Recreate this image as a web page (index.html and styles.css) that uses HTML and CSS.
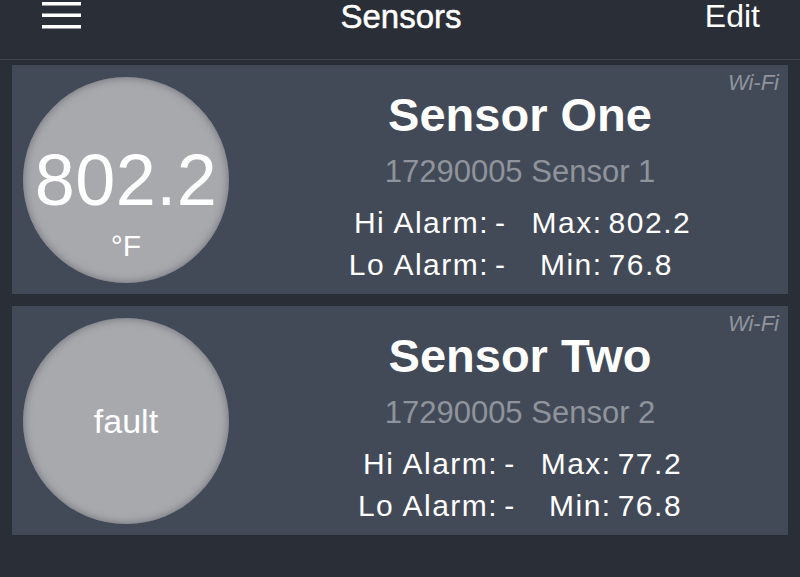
FILE: index.html
```html
<!DOCTYPE html>
<html>
<head>
<meta charset="utf-8">
<link rel="stylesheet" href="styles.css">
</head>
<body>
<header class="topbar">
  <div class="topbar-left">
    <svg class="menu-icon" width="39" height="31" viewBox="0 0 39 31">
      <rect x="0" y="2" width="39" height="3.5" fill="#ffffff"/>
      <rect x="0" y="13.5" width="39" height="3.5" fill="#ffffff"/>
      <rect x="0" y="25" width="39" height="3.5" fill="#ffffff"/>
    </svg>
  </div>
  <div class="topbar-title">Sensors</div>
  <div class="topbar-right">Edit</div>
</header>
<main class="list">
  <section class="card">
    <div class="gauge">
      <div class="gauge-inner with-unit">
        <div class="gauge-value">802.2</div>
        <div class="gauge-unit">°F</div>
      </div>
    </div>
    <div class="info">
      <div class="name">Sensor One</div>
      <div class="serial">17290005 Sensor 1</div>
      <div class="stats">
        <div class="lbl">Hi Alarm:</div><div class="val">-</div>
        <div class="lbl gap">Max:</div><div class="val">802.2</div>
        <div class="lbl">Lo Alarm:</div><div class="val">-</div>
        <div class="lbl gap">Min:</div><div class="val">76.8</div>
      </div>
    </div>
    <div class="conn">Wi-Fi</div>
  </section>
  <section class="card">
    <div class="gauge">
      <div class="gauge-inner">
        <div class="gauge-fault">fault</div>
      </div>
    </div>
    <div class="info">
      <div class="name">Sensor Two</div>
      <div class="serial">17290005 Sensor 2</div>
      <div class="stats">
        <div class="lbl">Hi Alarm:</div><div class="val">-</div>
        <div class="lbl gap">Max:</div><div class="val">77.2</div>
        <div class="lbl">Lo Alarm:</div><div class="val">-</div>
        <div class="lbl gap">Min:</div><div class="val">76.8</div>
      </div>
    </div>
    <div class="conn">Wi-Fi</div>
  </section>
</main>
</body>
</html>
```
FILE: styles.css
```css
html, body {
  margin: 0;
  padding: 0;
  background: #2a2e36;
  font-family: "Liberation Sans", Arial, sans-serif;
  color: #ffffff;
}

.topbar {
  height: 59px;
  border-bottom: 1px solid #3f444d;
  display: grid;
  grid-template-columns: 1fr auto 1fr;
  align-items: start;
  padding: 0 40px 0 42px;
  box-sizing: content-box;
}

.topbar-left {
  display: flex;
}

.menu-icon {
  display: block;
}

.topbar-title {
  font-size: 33px;
  line-height: 33px;
  text-align: center;
  -webkit-text-stroke: 0.5px #ffffff;
}

.topbar-right {
  font-size: 32px;
  line-height: 33px;
  text-align: right;
}

.list {
  display: flex;
  flex-direction: column;
  gap: 12px;
  padding: 5px 12px 0 12px;
}

.card {
  position: relative;
  background: #434a57;
  display: flex;
  align-items: center;
  padding-left: 11px;
  min-height: 229px;
}

.gauge {
  width: 206px;
  height: 206px;
  border-radius: 50%;
  flex: none;
  background: #a8a9ad;
  box-shadow: inset 0 0 9px rgba(55, 60, 72, 0.55);
  display: flex;
  align-items: center;
  justify-content: center;
}

.gauge-inner {
  display: flex;
  flex-direction: column;
  align-items: center;
}

.gauge-inner.with-unit {
  padding-top: 48px;
}

.gauge-value {
  font-size: 72px;
  line-height: 72px;
  letter-spacing: 0.5px;
}

.gauge-unit {
  font-size: 30px;
  line-height: 36px;
  margin-top: 12px;
}

.gauge-fault {
  font-size: 34px;
  line-height: 40px;
}

.info {
  flex: 1;
  margin-left: 23px;
  display: flex;
  flex-direction: column;
  align-items: center;
  padding: 22px 0 8px 0;
}

.name {
  font-size: 47px;
  line-height: 56px;
  font-weight: bold;
}

.serial {
  margin-top: 8px;
  font-size: 31px;
  line-height: 42px;
  color: #8f949c;
}

.stats {
  margin-top: 9px;
  display: grid;
  grid-template-columns: auto auto auto auto;
  font-size: 30px;
  line-height: 42px;
  letter-spacing: 1.5px;
}

.lbl {
  text-align: right;
}

.val {
  text-align: left;
  padding-left: 6px;
}

.lbl.gap {
  padding-left: 25px;
}

.conn {
  position: absolute;
  top: 7px;
  right: 9px;
  font-size: 22px;
  line-height: 22px;
  font-style: italic;
  color: #8f949d;
}
```
